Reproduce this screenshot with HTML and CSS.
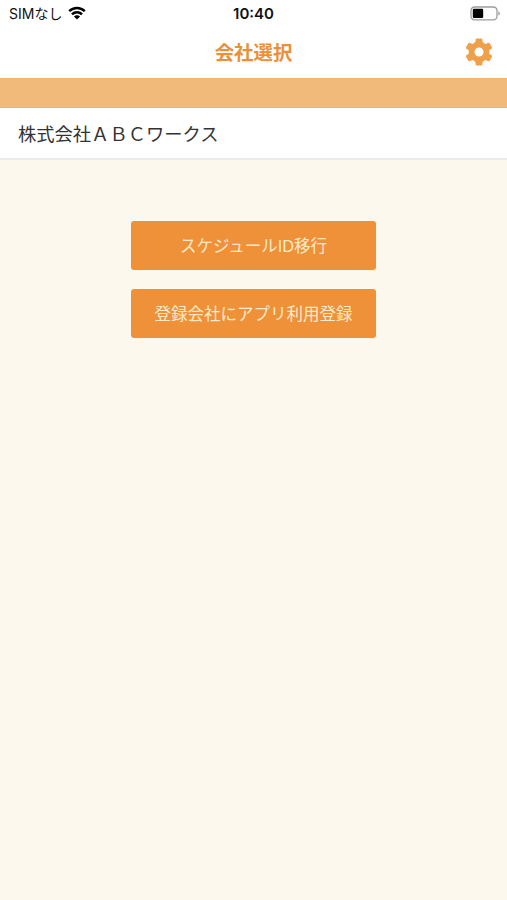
FILE: index.html
```html
<!DOCTYPE html>
<html lang="ja">
<head>
  <meta charset="UTF-8">
  <meta name="viewport" content="width=device-width, initial-scale=1.0">
  <title>会社選択</title>
  <link rel="stylesheet" href="styles.css">
</head>
<body>
  <div class="status-bar">
    <div class="carrier">
      <span>SIMなし</span>
      <svg class="wifi" viewBox="0 0 18 14" width="18" height="14">
        <path d="M1.2 5.2a11.2 11.2 0 0 1 15.6 0M4 8.3a7.2 7.2 0 0 1 10 0" fill="none" stroke="#000" stroke-width="2.5"/>
        <path d="M9 13.6L5.9 10.5a4.4 4.4 0 0 1 6.2 0z"/>
      </svg>
    </div>
    <div class="time">10:40</div>
    <svg class="battery" viewBox="0 0 31 15" width="31" height="15">
      <rect x="1" y="1" width="26" height="12.8" rx="3.6" fill="#fff" stroke="#9c9c9c" stroke-width="1.3"/>
      <rect x="2.8" y="2.8" width="10.4" height="9.2" rx="1.2"/>
      <path d="M28.4 5.2c2 .8 2 3.6 0 4.4z" fill="#9c9c9c"/>
    </svg>
  </div>
  <div class="header">
    <h1 class="title">会社選択</h1>
    <svg class="setting" viewBox="-14 -14 28 28" width="28" height="28">
      <mask id="hole">
        <rect x="-14" y="-14" width="28" height="28" fill="#fff"/>
        <circle r="4.5" fill="#000"/>
      </mask>
      <g mask="url(#hole)" fill="#eea04b">
        <circle r="10.4"/>
        <path id="tooth" d="M-3.8 -8L-3.4 -12.6Q-3.2 -13.6 -2.2 -13.6H2.2Q3.2 -13.6 3.4 -12.6L3.8 -8V8L3.4 12.6Q3.2 13.6 2.2 13.6H-2.2Q-3.2 13.6 -3.4 12.6L-3.8 8z"/>
        <use href="#tooth" transform="rotate(60)"/>
        <use href="#tooth" transform="rotate(120)"/>
      </g>
    </svg>
  </div>
  <div class="band"></div>
  <div class="company">株式会社ＡＢＣワークス</div>
  <div class="buttons">
    <button class="btn" type="button">スケジュールID移行</button>
    <button class="btn" type="button">登録会社にアプリ利用登録</button>
  </div>
</body>
</html>
```

FILE: styles.css
```css
*{
  box-sizing: border-box;
}
body{
  margin: 0;
  min-height: 100vh;
  background: #fcf8ee;
  font-family: Inter, "Noto Sans CJK JP", sans-serif;
  color: #333;
}
.status-bar{
  display: grid;
  grid-template-columns: 1fr auto 1fr;
  align-items: center;
  height: 27px;
  padding: 0 6px;
  background: #fff;
  color: #111;
}
.carrier{
  display: flex;
  align-items: center;
  gap: 6px;
  padding-left: 3px;
  font-size: 14px;
  line-height: 27px;
}
.wifi{
  margin-bottom: 2px;
}
.time{
  font-size: 15px;
  font-weight: 600;
}
.battery{
  justify-self: end;
}
/* 标题栏 */
.header{
  display: grid;
  grid-template-columns: 1fr auto 1fr;
  align-items: center;
  height: 51px;
  padding: 0 14px;
  background: #fff;
}
.title{
  grid-column: 2;
  margin: 0;
  padding-top: 2px;
  font-size: 19.4px;
  line-height: 49px;
  color: #ea9038;
}
.setting{
  justify-self: end;
  margin-bottom: 1px;
}
.band{
  height: 30px;
  background: #f2ba7a;
  border-top: 1px solid #eeb577;
  border-bottom: 1px solid #eeb577;
}
.company{
  height: 52px;
  padding-left: 18px;
  border-bottom: 2px solid #ebebe9;
  background: #fff;
  font-family: "Noto Sans CJK JP", sans-serif;
  font-size: 18.3px;
  line-height: 51px;
}
.buttons{
  display: flex;
  flex-direction: column;
  align-items: center;
  gap: 19px;
  padding-top: 61px;
}
.btn{
  width: 245px;
  height: 49px;
  padding: 0 0 1px;
  border: none;
  border-radius: 3px;
  background: #ee9138;
  font-family: inherit;
  font-size: 16.5px;
  color: #fdeacb;
}
```
